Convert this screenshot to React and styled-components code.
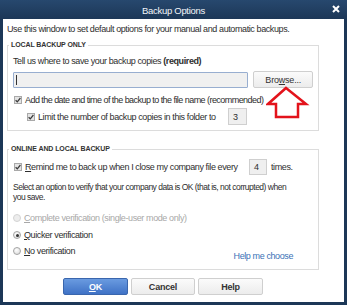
import React from "react";
import styled, { createGlobalStyle } from "styled-components";

const Global = createGlobalStyle`
  html, body { margin: 0; padding: 0; background: #1d3a5c; }
  body { font-family: "Liberation Sans", Arial, sans-serif; }
  * { box-sizing: border-box; }
`;

const Window = styled.div`
  position: relative;
  width: 347px;
  height: 305px;
  display: flex;
  flex-direction: column;
  background: #1c3757;
  padding: 0 3px 3px 3px;
  font-family: "Liberation Sans", Arial, sans-serif;
  font-size: 9px;
  letter-spacing: -0.4px;
  color: #2e2e2e;
`;

const TitleBar = styled.div`
  position: relative;
  height: 19px;
  display: flex;
  align-items: center;
  justify-content: center;
  margin: 0 -3px;
  background: linear-gradient(#27486e, #1c3757);
  color: #f2f5f9;
  font-size: 9.5px;
  letter-spacing: -0.3px;
  padding-top: 2px;
`;

const Close = styled.svg`
  position: absolute;
  right: 7px;
  top: 5px;
`;

const Body = styled.div`
  flex: 1;
  background: #ffffff;
  padding: 4px 4px 0 4px;
  display: flex;
  flex-direction: column;
`;

const Line = styled.div`
  line-height: 12px;
  white-space: nowrap;
`;

const Group = styled.fieldset`
  width: 312px;
  margin: ${(p) => p.$top || 0}px 0 0 0;
  border: 1px solid #dcdcdc;
  padding: 5px 5px ${(p) => p.$bottom || 4}px 5px;
  display: flex;
  flex-direction: column;
  min-width: 0;
`;

const Legend = styled.legend`
  font-size: 7px;
  font-weight: bold;
  line-height: 10px;
  color: #333;
  padding: 0 2px;
  margin-left: -4px;
  letter-spacing: -0.1px;
`;

const Row = styled.div`
  display: flex;
  align-items: ${(p) => p.$align || "center"};
  margin-top: ${(p) => p.$top || 0}px;
  margin-left: ${(p) => p.$indent || 0}px;
  line-height: 12px;
  white-space: nowrap;
`;

const PathInput = styled.div`
  width: 237px;
  height: 16px;
  border: 1px solid #98aed0;
  border-radius: 1px;
  background: #f0f0f0;
  display: flex;
  align-items: center;
  padding-left: 2px;
  &::before {
    content: "";
    width: 1px;
    height: 10px;
    background: #333;
  }
`;

const Button = styled.div`
  height: ${(p) => p.$h || 17}px;
  width: ${(p) => p.$w}px;
  display: flex;
  align-items: center;
  justify-content: center;
  border: 1px solid ${(p) => (p.$primary ? "#3a66ad" : "#cfcfcf")};
  border-radius: 2px;
  background: ${(p) =>
    p.$primary
      ? "linear-gradient(#6a9be0, #3f72c6)"
      : "linear-gradient(#fbfbfb, #ececec)"};
  color: ${(p) => (p.$primary ? "#ffffff" : "#333")};
  font-weight: ${(p) => (p.$bold ? "bold" : "normal")};
  font-size: 9px;
  letter-spacing: -0.2px;
`;

const U = styled.span`
  text-decoration: underline;
`;

const Box = styled.span`
  width: 8px;
  height: 8px;
  flex: none;
  border: 1px solid #a9a9a9;
  background: #e4e4e4;
  margin-left: 1px;
  margin-right: 3px;
  display: flex;
  align-items: center;
  justify-content: center;
`;

const Radio = styled.span`
  width: 8px;
  height: 8px;
  flex: none;
  border-radius: 50%;
  border: 1px solid ${(p) => (p.$disabled ? "#d4d4d4" : "#a4a4a4")};
  background: ${(p) =>
    p.$disabled ? "#ededed" : "radial-gradient(circle at 40% 35%, #ffffff, #d6d6d6)"};
  margin-right: 3px;
  display: flex;
  align-items: center;
  justify-content: center;
  &::after {
    content: "";
    width: 3px;
    height: 3px;
    border-radius: 50%;
    background: ${(p) => (p.$checked ? "#333" : "transparent")};
  }
`;

const FixedLabel = styled.span`
  width: ${(p) => p.$w}px;
  flex: none;
`;

const TightLabel = styled.span`
  letter-spacing: -0.55px;
`;

const SmallInput = styled.div`
  width: ${(p) => p.$w}px;
  height: ${(p) => p.$h}px;
  border: 1px solid #cfcfcf;
  background: #efefef;
  padding-left: 4px;
  display: flex;
  align-items: center;
  flex: none;
`;

const Label = styled.span`
  color: ${(p) => (p.$disabled ? "#a8a8a8" : "inherit")};
`;

const Para = styled.div`
  line-height: 10px;
  margin-top: 7px;
  white-space: nowrap;
  font-size: 8.5px;
  letter-spacing: -0.5px;
`;

const Link = styled.span`
  margin-left: auto;
  margin-right: 20px;
  margin-top: 5px;
  color: #3b72b7;
`;

const ButtonRow = styled.div`
  width: 312px;
  display: flex;
  justify-content: center;
  gap: 3px;
  margin-top: 8px;
`;

const Arrow = styled.svg`
  position: absolute;
  left: 266px;
  top: 86px;
`;

const Check = () => (
  <svg width="6" height="6" viewBox="0 0 6 6">
    <path d="M0.6 3.2 L2.3 4.8 L5.4 1" fill="none" stroke="#3a3a3a" strokeWidth="1.2" />
  </svg>
);

export default function App() {
  return (
    <>
      <Global />
      <Window>
        <TitleBar>
          Backup Options
          <Close width="8" height="8" viewBox="0 0 8 8">
            <path d="M1 1 L7 7 M7 1 L1 7" stroke="#ffffff" strokeWidth="2" />
          </Close>
        </TitleBar>
        <Body>
          <Line>Use this window to set default options for your manual and automatic backups.</Line>
          <Group $top={5} $bottom={5}>
            <Legend>LOCAL BACKUP ONLY</Legend>
            <Line>
              Tell us where to save your backup copies <b>(required)</b>
            </Line>
            <Row $top={4}>
              <PathInput />
              <Button $w={60} $h={17} style={{ marginLeft: 5 }}>
                Bro<U>w</U>se...
              </Button>
            </Row>
            <Row $top={6}>
              <Box>
                <Check />
              </Box>
              <TightLabel>Add the date and time of the backup to the file name (recommended)</TightLabel>
            </Row>
            <Row $top={2} $indent={13}>
              <Box>
                <Check />
              </Box>
              <FixedLabel $w={190}>Limit the number of backup copies in this folder to</FixedLabel>
              <SmallInput $w={19} $h={17}>3</SmallInput>
            </Row>
          </Group>
          <Group $top={13} $bottom={7}>
            <Legend>ONLINE AND LOCAL BACKUP</Legend>
            <Row>
              <Box>
                <Check />
              </Box>
              <FixedLabel $w={224}>
                <U>R</U>emind me to back up when I close my company file every
              </FixedLabel>
              <SmallInput $w={18} $h={16}>4</SmallInput>
              <span style={{ marginLeft: 4 }}>times.</span>
            </Row>
            <Para>
              Select an option to verify that your company data is OK (that is, not corrupted) when
              <br />
              you save.
            </Para>
            <Row $top={10}>
              <Radio $disabled />
              <Label $disabled>
                <U>C</U>omplete verification (single-user mode only)
              </Label>
            </Row>
            <Row $top={5}>
              <Radio $checked />
              <Label>
                <U>Q</U>uicker verification
              </Label>
            </Row>
            <Row $top={4} $align="flex-start">
              <Radio style={{ marginTop: 2 }} />
              <Label>
                <U>N</U>o verification
              </Label>
              <Link>Help me choose</Link>
            </Row>
          </Group>
          <ButtonRow>
            <Button $w={65} $primary $bold>
              <U>O</U>K
            </Button>
            <Button $w={64} $bold>
              Cancel
            </Button>
            <Button $w={65} $bold>
              Help
            </Button>
          </ButtonRow>
        </Body>
        <Arrow width="44" height="34" viewBox="0 0 44 34">
          <path
            d="M20 2 L40 18 L32 18 L32 31 L10 31 L10 18 L2 18 Z"
            fill="#ffffff"
            stroke="#e3131b"
            strokeWidth="2.5"
            strokeLinejoin="miter"
          />
        </Arrow>
      </Window>
    </>
  );
}
